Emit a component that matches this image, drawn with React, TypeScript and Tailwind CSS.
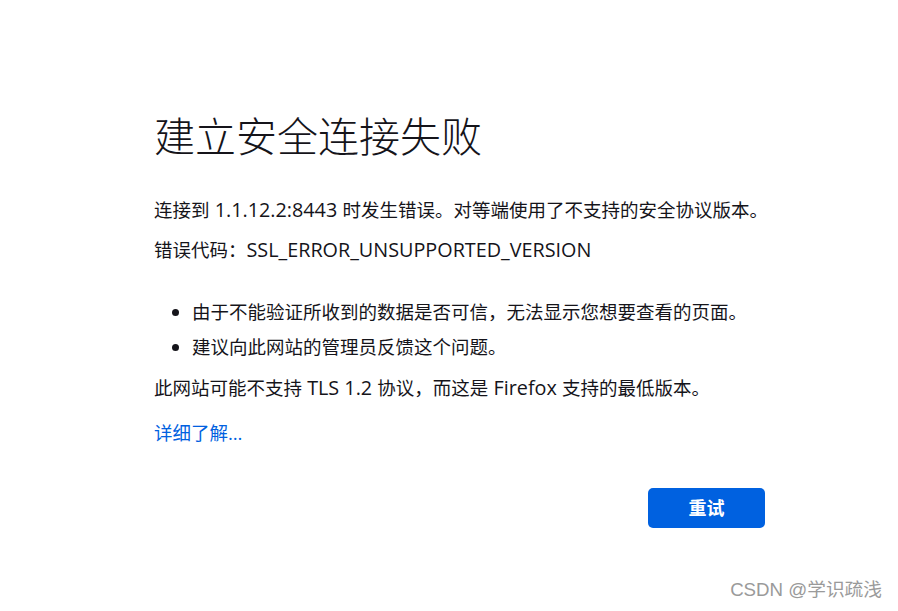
const FONT = "font-['Open_Sans','Noto_Sans_CJK_SC',sans-serif]";

function L({ children }: { children: string }) {
  // Latin runs render a touch wider in the original (Segoe UI)
  return <span className="text-[19.8px] leading-none">{children}</span>;
}

export default function App() {
  return (
    <div className={`relative min-h-[611px] w-full bg-white text-[#15141a] ${FONT}`}>
      <div className="ml-[154px] w-[611px] pt-[106px]">
        <h1 className="text-[41px] font-light leading-[60px]">建立安全连接失败</h1>

        <div className="mt-[30px] whitespace-nowrap text-[18.5px] leading-[28px]">
          <p>
            连接到<L> 1.1.12.2:8443 </L>时发生错误。对等端使用了不支持的安全协议版本。
          </p>
          <p className="mt-[12px]">
            错误代码：<L>SSL_ERROR_UNSUPPORTED_VERSION</L>
          </p>

          <ul className="mt-[34px] list-disc pl-[38px]">
            <li>由于不能验证所收到的数据是否可信，无法显示您想要查看的页面。</li>
            <li className="mt-[7px]">建议向此网站的管理员反馈这个问题。</li>
          </ul>

          <p className="mt-[13px]">
            此网站可能不支持<L> TLS 1.2 </L>协议，而这是<L> Firefox </L>支持的最低版本。
          </p>
          <p className="mt-[17px]">
            <a className="text-[#0061e0]">详细了解…</a>
          </p>
        </div>

        <div className="mt-[41px] flex justify-end">
          <button className="h-[40px] w-[117px] rounded-[5px] bg-[#0061e0] text-[18px] font-bold text-white">
            重试
          </button>
        </div>
      </div>

      <div className="absolute bottom-[7px] right-[16px] font-['Liberation_Sans','Noto_Sans_CJK_SC',sans-serif] text-[18.7px] text-[#9a9a9a]">
        CSDN @学识疏浅
      </div>
    </div>
  );
}
